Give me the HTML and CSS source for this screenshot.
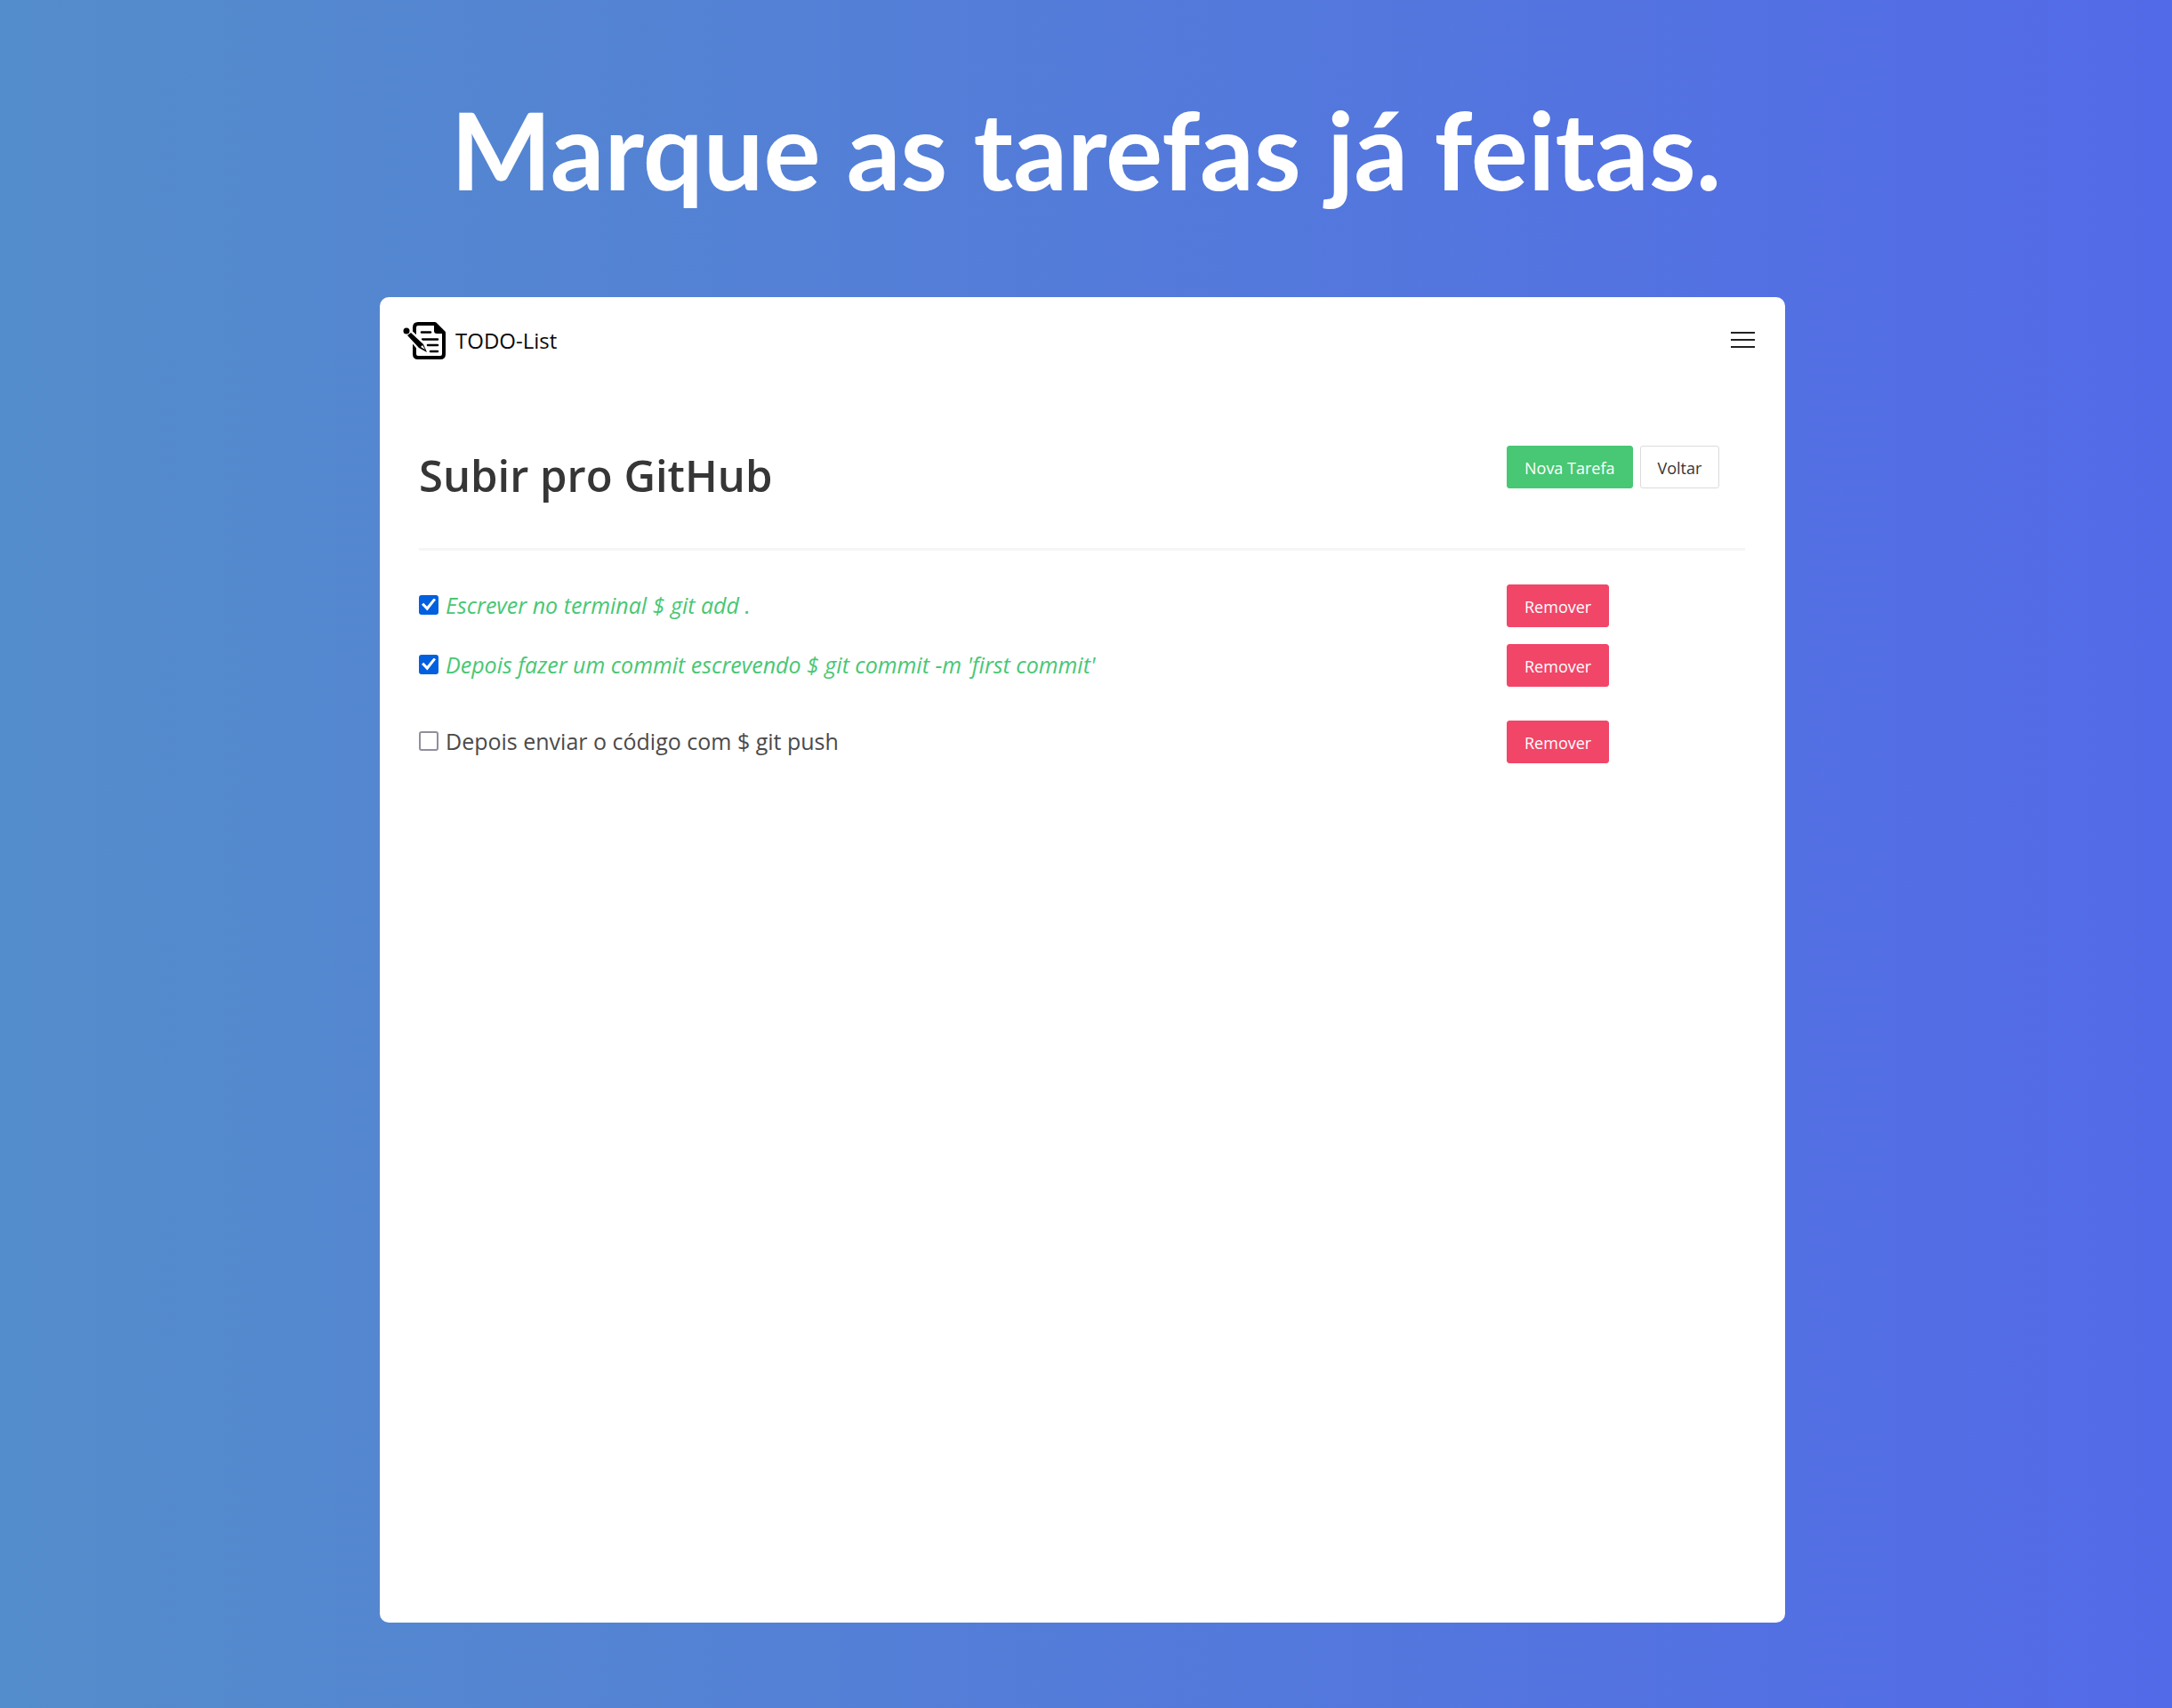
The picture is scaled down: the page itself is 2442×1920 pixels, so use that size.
FILE: index.html
```html
<!DOCTYPE html>
<html lang="pt-BR">
<head>
<meta charset="utf-8">
<meta name="viewport" content="width=device-width, initial-scale=1">
<title>TODO-List</title>
<link rel="stylesheet" href="styles.css">
</head>
<body>
<div class="page">
  <h1 class="headline">Marque as tarefas já feitas.</h1>
  <div class="stage">
    <div class="card">
      <header class="navbar">
        <a class="brand" href="#">
          <svg class="brand-icon" viewBox="0 0 48 42" aria-hidden="true">
            <path d="M17 2H36L46 12V36Q46 40 42 40H17Q13 40 13 36V6Q13 2 17 2Z" fill="#fff" stroke="#000" stroke-width="4" stroke-linejoin="round"/>
            <path d="M35 1L47 13H38Q35 13 35 10Z"/>
            <path d="M21 11.500H31M22 19.500H39M28 26H39M31 33H39" fill="none" stroke="#000" stroke-width="2.600" stroke-linecap="round"/>
            <path d="M6 16L10 12L24 25L27 34L18 30Z" fill="#fff" stroke="#fff" stroke-width="3.500"/>
            <circle cx="4" cy="10" r="3.500"/>
            <path d="M5 15L9 12L23 25L27 34L18 29Z"/>
            <path d="M20 28L22 26L25 31Z" fill="#fff"/>
          </svg>
          <span>TODO-List</span>
        </a>
        <button class="menu" type="button" aria-label="Menu">
          <span class="bar"></span><span class="bar"></span><span class="bar"></span>
        </button>
      </header>
      <main class="content">
        <div class="row title-row">
          <h2 class="title">Subir pro GitHub</h2>
          <div class="actions">
            <button class="button success" type="button">Nova Tarefa</button>
            <button class="button" type="button">Voltar</button>
          </div>
        </div>
        <hr class="divider">
        <ul class="tasks">
          <li class="row">
            <label class="task done"><input class="check" type="checkbox" checked><span>Escrever no terminal $ git add .</span></label>
            <div class="actions"><button class="button danger" type="button">Remover</button></div>
          </li>
          <li class="row">
            <label class="task done"><input class="check" type="checkbox" checked><span>Depois fazer um commit escrevendo $ git commit -m 'first commit'</span></label>
            <div class="actions"><button class="button danger" type="button">Remover</button></div>
          </li>
        </ul>
        <ul class="tasks">
          <li class="row">
            <label class="task"><input class="check" type="checkbox"><span>Depois enviar o código com $ git push</span></label>
            <div class="actions"><button class="button danger" type="button">Remover</button></div>
          </li>
        </ul>
      </main>
    </div>
  </div>
</div>
</body>
</html>
```
FILE: styles.css
```css
* { box-sizing: border-box; }

body {
  margin: 0;
  font-family: "Open Sans", "Noto Sans", sans-serif;
  font-size: 25px;
  line-height: 36px;
  color: #4a4a4a;
}

.page {
  display: flex;
  flex-direction: column;
  min-height: 100vh;
  padding: 96px 0;
  background: linear-gradient(90deg, #548dcb, #536ae8);
}

.headline {
  margin: 0 0 94px;
  font-family: Lato, sans-serif;
  font-size: 120px;
  font-weight: 700;
  line-height: 144px;
  text-align: center;
  color: #fff;
}

.stage {
  display: grid;
  flex: 1;
  grid-template-columns: 427fr 1580fr 435fr;
}

.card {
  grid-column: 2;
  border-radius: 10px;
  background: #fff;
}

.navbar {
  display: flex;
  align-items: center;
  justify-content: space-between;
  padding: 28px 34px 0 26px;
}

.brand {
  display: flex;
  align-items: center;
  gap: 11px;
  font-size: 24px;
  line-height: 42px;
  color: #0a0a0a;
  text-decoration: none;
}

.brand-icon { width: 48px; height: 42px; }

.menu {
  display: flex;
  flex-direction: column;
  gap: 6px;
  padding: 0 0 2px;
  border: 0;
  background: none;
}

.bar { width: 27px; height: 2px; background: #222; }

.content { padding: 97px 45px 0 44px; }

.row {
  display: grid;
  grid-template-columns: 1223fr 268fr;
  align-items: center;
}

.title-row { align-items: start; }

.title {
  margin: 0;
  padding-bottom: 4px;
  font-size: 49px;
  font-weight: 600;
  line-height: 66px;
  color: #363636;
}

.actions { display: flex; gap: 8px; }

.button {
  height: 48px;
  padding: 2px 19px 0;
  border: 1px solid #dbdbdb;
  border-radius: 3px;
  font: 18px/28px "Open Sans", "Noto Sans", sans-serif;
  white-space: nowrap;
  color: #363636;
  background: #fff;
}

.success { border-color: #48c774; color: #fff; background: #48c774; }
.danger { border-color: #f14668; color: #fff; background: #f14668; }

.divider {
  height: 3px;
  margin: 45px 0 38px;
  border: 0;
  background: #f5f5f5;
}

.tasks {
  display: grid;
  gap: 19px;
  margin: 0 0 38px;
  padding: 0;
  list-style: none;
}

.task { display: flex; align-items: center; gap: 8px; padding-bottom: 3px; }
.done { font-style: italic; color: #48c774; }

.check {
  display: grid;
  place-items: center;
  width: 22px;
  height: 22px;
  margin: 0;
  border: 2px solid #8f8f9d;
  border-radius: 3px;
  background: #fff;
  appearance: none;
}

.check:checked { border-color: #0060df; background: #0060df; }

.check:checked::before {
  content: "";
  width: 16px;
  height: 14px;
  background: #fff;
  clip-path: polygon(0 52%, 14% 38%, 38% 66%, 86% 0, 100% 12%, 40% 100%);
}
```
